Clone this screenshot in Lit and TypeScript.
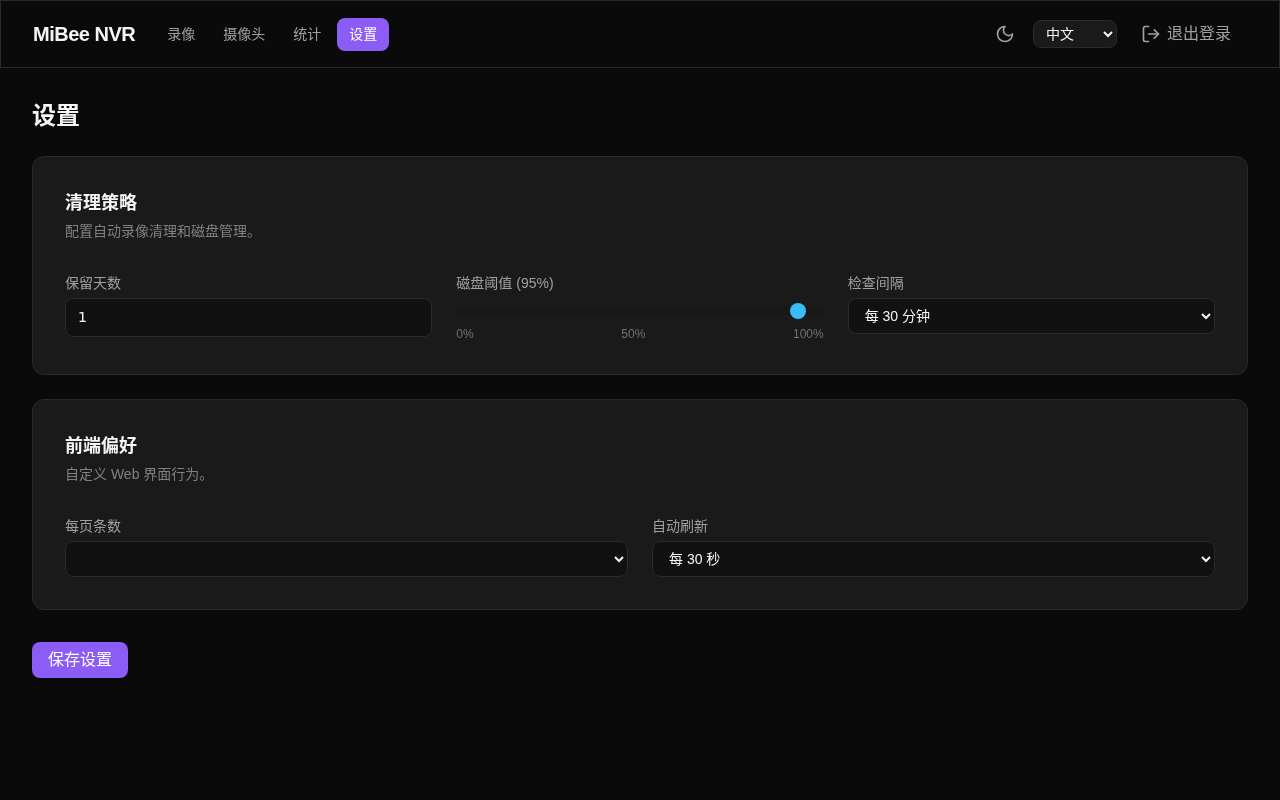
import { LitElement, html, css } from "lit";
import { customElement, query, state } from "lit/decorators.js";

@customElement("app-root")
export class AppRoot extends LitElement {
  static styles = css`
    :host {
      display: block;
      min-height: 800px;
      background: #0a0a0a;
      color: #f5f5f5;
      font-family: "Liberation Sans", "Noto Sans CJK SC", sans-serif;
      font-size: 14px;
      box-sizing: border-box;
    }

    * {
      box-sizing: border-box;
    }

    /* own layer, keeps text on greyscale antialiasing */
    .page {
      will-change: transform;
    }

    .navbar {
      display: flex;
      align-items: center;
      justify-content: space-between;
      height: 68px;
      padding: 0 32px;
      border: 1px solid #2a2a2a;
    }

    .nav-left,
    .nav-right {
      display: flex;
      align-items: center;
    }

    .logo {
      font-size: 20px;
      font-weight: 700;
      letter-spacing: -0.5px;
      margin-right: 20px;
    }

    .nav-links {
      display: flex;
      gap: 4px;
    }

    .nav-link {
      padding: 7px 12px;
      height: 33px;
      line-height: 19px;
      border-radius: 8px;
      color: #a0a0a0;
    }

    .nav-link.active {
      background: #8b5cf6;
      color: #fff;
    }

    .icon-btn {
      display: flex;
      padding: 8px;
      color: #a0a0a0;
      margin-right: 10px;
    }

    .logout {
      display: flex;
      align-items: center;
      gap: 6px;
      padding: 0 16px;
      margin-left: 8px;
      font-size: 16px;
      color: #a0a0a0;
    }

    .logout-text {
      padding-bottom: 4px;
    }

    main {
      padding: 32px;
    }

    h1 {
      margin: 0 0 24px;
      font-size: 24px;
      line-height: 32px;
      font-weight: 700;
    }

    .card {
      background: #1a1a1a;
      border: 1px solid #2a2a2a;
      border-radius: 12px;
      padding: 32px;
      margin-bottom: 24px;
    }

    h2 {
      margin: 0;
      padding-top: 1px;
      font-size: 18px;
      line-height: 27px;
      font-weight: 700;
    }

    .desc {
      margin: 4px 0 31px;
      color: #808080;
      line-height: 21px;
    }

    .grid {
      display: grid;
      gap: 24px;
    }

    .cols-3 {
      grid-template-columns: repeat(3, 1fr);
    }

    .cols-2 {
      grid-template-columns: repeat(2, 1fr);
    }

    label {
      display: block;
      color: #a0a0a0;
      line-height: 21px;
      margin-bottom: 4px;
    }

    input[type="number"],
    select {
      background: #111111;
      border: 1px solid #2a2a2a;
      border-radius: 8px;
      color: #f5f5f5;
      font-family: inherit;
      outline: 0;
      color-scheme: dark;
    }

    input[type="number"] {
      width: 100%;
      height: 39px;
      padding: 0 12px 2px;
      font-family: "DejaVu Sans", sans-serif;
      font-size: 14px;
      appearance: textfield;
    }

    .lang {
      width: 84px;
      height: 28px;
      padding: 0 8px;
      font-size: 14px;
      background: #1a1a1a;
    }

    .field-select {
      width: 100%;
      height: 36px;
      padding: 0 12px;
      font-size: 14px;
    }

    .range {
      display: block;
      width: 100%;
      height: 16px;
      margin: 9px 0 0;
      appearance: none;
      background: transparent;
    }

    .range::-webkit-slider-runnable-track {
      height: 8px;
      border-radius: 4px;
      background: #171717;
    }

    .range::-webkit-slider-thumb {
      appearance: none;
      width: 16px;
      height: 16px;
      margin-top: -4px;
      border-radius: 50%;
      background: #38bdf8;
    }

    .scale {
      display: flex;
      justify-content: space-between;
      margin-top: 7px;
      font-size: 12px;
      line-height: 16px;
      color: #737373;
    }

    .save {
      display: block;
      height: 36px;
      margin-top: 32px;
      padding: 0 16px 4px;
      border: 0;
      border-radius: 8px;
      background: #8b5cf6;
      color: #fff;
      font-family: inherit;
      font-size: 16px;
    }
  `;

  @state()
  private threshold = 95;

  @query("#page-size")
  private pageSize!: HTMLSelectElement;

  firstUpdated() {
    this.pageSize.selectedIndex = -1;
  }

  render() {
    return html`
      <div class="page">
        <header class="navbar">
          <div class="nav-left">
            <span class="logo">MiBee NVR</span>
            <nav class="nav-links">
              <span class="nav-link">录像</span>
              <span class="nav-link">摄像头</span>
              <span class="nav-link">统计</span>
              <span class="nav-link active">设置</span>
            </nav>
          </div>
          <div class="nav-right">
            <span class="icon-btn">
              <svg width="20" height="20" viewBox="0 0 24 24" fill="none" stroke="currentColor" stroke-width="2" stroke-linecap="round" stroke-linejoin="round">
                <path d="M12 3a6 6 0 0 0 9 9 9 9 0 1 1-9-9Z"></path>
              </svg>
            </span>
            <select class="lang">
              <option>中文</option>
              <option>English</option>
            </select>
            <span class="logout">
              <svg width="20" height="20" viewBox="0 0 24 24" fill="none" stroke="currentColor" stroke-width="2" stroke-linecap="round" stroke-linejoin="round">
                <path d="M9 21H5a2 2 0 0 1-2-2V5a2 2 0 0 1 2-2h4"></path>
                <polyline points="16 17 21 12 16 7"></polyline>
                <line x1="21" y1="12" x2="9" y2="12"></line>
              </svg>
              <span class="logout-text">退出登录</span>
            </span>
          </div>
        </header>
        <main>
          <h1>设置</h1>
          <section class="card">
            <h2>清理策略</h2>
            <p class="desc">配置自动录像清理和磁盘管理。</p>
            <div class="grid cols-3">
              <div>
                <label>保留天数</label>
                <input type="number" value="1" />
              </div>
              <div>
                <label>磁盘阈值 (${this.threshold}%)</label>
                <input class="range" type="range" min="0" max="100" .value=${String(this.threshold)} />
                <div class="scale"><span>0%</span><span>50%</span><span>100%</span></div>
              </div>
              <div>
                <label>检查间隔</label>
                <select class="field-select">
                  <option>每 30 分钟</option>
                  <option>每 60 分钟</option>
                </select>
              </div>
            </div>
          </section>
          <section class="card">
            <h2>前端偏好</h2>
            <p class="desc">自定义 Web 界面行为。</p>
            <div class="grid cols-2">
              <div>
                <label>每页条数</label>
                <select class="field-select" id="page-size">
                  <option>20</option>
                  <option>50</option>
                </select>
              </div>
              <div>
                <label>自动刷新</label>
                <select class="field-select">
                  <option>每 30 秒</option>
                  <option>每 60 秒</option>
                </select>
              </div>
            </div>
          </section>
          <button class="save" type="button">保存设置</button>
        </main>
      </div>
    `;
  }
}
